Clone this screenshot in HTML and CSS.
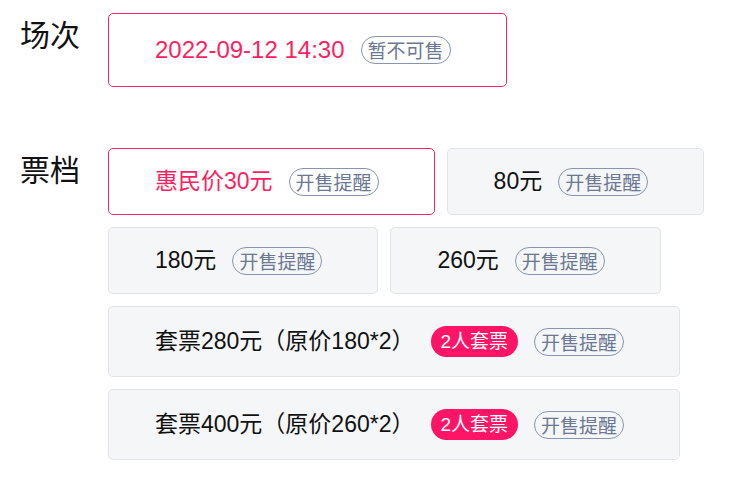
FILE: index.html
```html
<!DOCTYPE html>
<html lang="zh-CN">
<head>
  <meta charset="UTF-8" />
  <meta name="viewport" content="width=device-width, initial-scale=1.0" />
  <title>选择场次票档</title>
  <link rel="stylesheet" href="styles.css">
</head>
<body>
  <div class="picker">
    <div class="row session-row">
      <div class="label">场次</div>
      <div class="options">
        <div class="option session active">
          <span class="name">2022-09-12 14:30</span>
          <span class="tag">暂不可售</span>
        </div>
      </div>
    </div>

    <div class="row">
      <div class="label">票档</div>
      <div class="options">
        <div class="option active">
          <span class="name">惠民价30元</span>
          <span class="tag">开售提醒</span>
        </div>
        <div class="option">
          <span class="name">80元</span>
          <span class="tag">开售提醒</span>
        </div>
        <div class="option">
          <span class="name">180元</span>
          <span class="tag">开售提醒</span>
        </div>
        <div class="option">
          <span class="name">260元</span>
          <span class="tag">开售提醒</span>
        </div>
        <div class="option combo">
          <span class="name">套票280元（原价180*2）</span>
          <span class="tag tag-hot">2人套票</span>
          <span class="tag">开售提醒</span>
        </div>
        <div class="option combo">
          <span class="name">套票400元（原价260*2）</span>
          <span class="tag tag-hot">2人套票</span>
          <span class="tag">开售提醒</span>
        </div>
      </div>
    </div>
  </div>
</body>
</html>
```

FILE: styles.css
```css
body { margin: 0; background: #fff; font-family: "Liberation Sans", "Noto Sans CJK SC", sans-serif; color: #111; }
.picker { padding: 13px 0 0 20px; }
.row { display: flex; align-items: flex-start; }
.session-row { margin-bottom: 61px; }
.label { width: 88px; flex-shrink: 0; font-size: 30px; line-height: 1; margin-top: 5px; font-family: "Noto Sans CJK SC", sans-serif; }
.options { width: 620px; display: flex; flex-wrap: wrap; gap: 12px; }
.option { box-sizing: border-box; height: 67px; display: flex; align-items: center; padding: 0 55px 0 46px; background: #f5f6f8; border: 1px solid #e2e3e7; border-radius: 5px; }
.option.session { height: 74px; }
.option.combo { height: 71px; }
.option.active { background: #fff; border-color: #ff2466; }
.option .name { font-size: 23px; line-height: 1; }
.option.session .name { font-size: 24px; }
.option.active .name { color: #ff1f60; }
.tag { box-sizing: border-box; height: 28px; margin-left: 16px; padding: 0 6px; border: 1px solid #8795b0; border-radius: 14px; color: #6b7893; font-size: 19px; line-height: 26px; font-family: "Noto Sans CJK SC", sans-serif; white-space: nowrap; }
.tag-hot { height: 31px; padding: 0 10px; border: none; border-radius: 16px; background: #ff1466; color: #fff; font-size: 19px; line-height: 31px; font-family: "Liberation Sans", "Noto Sans CJK SC", sans-serif; }
```
